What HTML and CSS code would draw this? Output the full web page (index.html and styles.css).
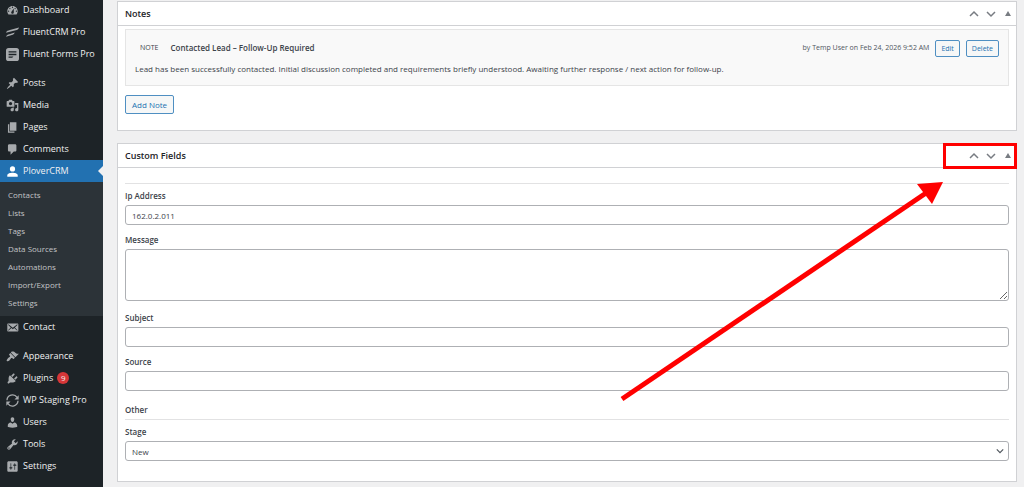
FILE: index.html
```html
<!DOCTYPE html>
<html lang="en">
<head>
    <meta charset="UTF-8">
    <meta name="viewport" content="width=device-width, initial-scale=1.0">
    <title>PloverCRM - Contact</title>
    <link rel="stylesheet" href="styles.css">
</head>
<body>
    <div class="admin">
        <nav class="sidebar">
            <a class="menu-item" href="#">
                <svg viewBox="0 0 20 20"><path fill-rule="evenodd" d="M3.76 16h12.48c1.1-1.37 1.76-3.11 1.76-5 0-4.42-3.58-8-8-8s-8 3.58-8 8c0 1.89.66 3.63 1.76 5zM10 4c.55 0 1 .45 1 1s-.45 1-1 1-1-.45-1-1 .45-1 1-1zM6 6c.55 0 1 .45 1 1s-.45 1-1 1-1-.45-1-1 .45-1 1-1zm8 0c.55 0 1 .45 1 1s-.45 1-1 1-1-.45-1-1 .45-1 1-1zm-5.37 5.55L12 7v6c0 1.1-.9 2-2 2s-2-.9-2-2c0-.57.24-1.08.63-1.45zM4 10c.55 0 1 .45 1 1s-.45 1-1 1-1-.45-1-1 .45-1 1-1zm12 0c.55 0 1 .45 1 1s-.45 1-1 1-1-.45-1-1 .45-1 1-1z"/></svg>
                Dashboard
            </a>
            <a class="menu-item" href="#">
                <svg viewBox="0 0 20 20"><path d="M0 10.200C1 7.500 3 7 6 6.200L20 2.200C19 5 17.500 5.800 15 6.500zM0 16.500C1 14 2.500 13.200 5 12.500L13.500 10C12.500 12.800 11 13.400 9 14z"/></svg>
                FluentCRM Pro
            </a>
            <a class="menu-item" href="#">
                <svg viewBox="0 0 20 20"><path fill-rule="evenodd" d="M4 0h12a4 4 0 0 1 4 4v12a4 4 0 0 1-4 4H4a4 4 0 0 1-4-4V4a4 4 0 0 1 4-4zM4 5v2h12V5zM4 9v2h12V9zM4 13v2h5.500l2-2z"/></svg>
                Fluent Forms Pro
            </a>
            <a class="menu-item group-start" href="#">
                <svg viewBox="0 0 20 20"><path d="M10.440 3.020l1.820-1.820 6.360 6.350-1.830 1.820c-1.050-.68-2.480-.57-3.410.36l-.75.75c-.92.93-1.040 2.350-.35 3.410l-1.830 1.820-2.410-2.410-2.800 2.790c-.42.42-3.380 2.710-3.800 2.290s1.860-3.390 2.280-3.810l2.790-2.790L4.100 9.360l1.830-1.820c1.050.69 2.480.57 3.400-.36l.75-.75c.93-.92 1.050-2.350.36-3.410z"/></svg>
                Posts
            </a>
            <a class="menu-item" href="#">
                <svg viewBox="0 0 20 20"><path fill-rule="evenodd" d="M13 11V4c0-.55-.45-1-1-1h-1.670L9 1H5L3.670 3H2c-.55 0-1 .45-1 1v7c0 .55.45 1 1 1h10c.55 0 1-.45 1-1zM7 4.500c1.380 0 2.500 1.120 2.500 2.500S8.380 9.500 7 9.500 4.500 8.380 4.500 7 5.620 4.500 7 4.500zM14 6h5v10.500c0 1.380-1.120 2.500-2.500 2.500S14 17.880 14 16.500s1.120-2.500 2.500-2.500c.17 0 .34.02.5.05V9h-3V6zm-4 8.050V13h2v3.500c0 1.380-1.120 2.500-2.500 2.500S7 17.880 7 16.500 8.120 14 9.500 14c.17 0 .34.02.5.05z"/></svg>
                Media
            </a>
            <a class="menu-item" href="#">
                <svg viewBox="0 0 20 20"><path d="M6 15V2h10v13H6zm-1 1h8v2H3V5h2v11z"/></svg>
                Pages
            </a>
            <a class="menu-item" href="#">
                <svg viewBox="0 0 20 20"><path d="M5 2h9c1.100 0 2 .9 2 2v7c0 1.100-.9 2-2 2h-2l-5 5v-5H5c-1.100 0-2-.9-2-2V4c0-1.100.9-2 2-2z"/></svg>
                Comments
            </a>
            <a class="menu-item current" href="#">
                <svg viewBox="0 0 20 20"><circle cx="10" cy="6" r="4"/><path d="M2 18v-2c0-3 5-4 8-4s8 1 8 4v2z"/></svg>
                PloverCRM
            </a>
            <div class="submenu">
                <a href="#">Contacts</a>
                <a href="#">Lists</a>
                <a href="#">Tags</a>
                <a href="#">Data Sources</a>
                <a href="#">Automations</a>
                <a href="#">Import/Export</a>
                <a href="#">Settings</a>
            </div>
            <a class="menu-item" href="#">
                <svg viewBox="0 0 20 20"><path fill-rule="evenodd" d="M19 14.500v-9c0-.83-.67-1.500-1.500-1.500H3.490c-.83 0-1.500.67-1.500 1.500v9c0 .83.67 1.500 1.500 1.500H17.500c.83 0 1.500-.67 1.500-1.500zm-1.310-9.110c.33.33.15.67-.03.84L13.600 9.950l3.900 4.060c.12.14.2.36.06.51-.13.16-.43.15-.56.05l-4.370-3.730-2.140 1.950-2.130-1.950-4.370 3.730c-.13.1-.43.11-.56-.05-.14-.15-.06-.37.06-.51l3.900-4.060-4.060-3.720c-.18-.17-.36-.51-.03-.84s.67-.17.95.07l6.240 5.040 6.250-5.040c.28-.24.62-.4.95-.07z"/></svg>
                Contact
            </a>
            <a class="menu-item group-start" href="#">
                <svg viewBox="0 0 20 20"><path d="M14.480 11.060L7.410 3.990l1.500-1.500c.5-.56 2.300-.47 3.510.32 1.210.8 1.430 1.280 2.910 2.100 1.180.64 2.450 1.260 4.450.85zm-.71.71L6.700 4.700 4.930 6.470c-.39.39-.39 1.020 0 1.410l1.060 1.060c.39.39.39 1.030 0 1.420-.6.6-1.430 1.110-2.210 1.690-.35.26-.7.53-1.010.84C1.430 14.230.4 16.080 1.400 17.070c.99 1 2.840-.03 4.180-1.360.31-.31.58-.66.85-1.020.57-.78 1.080-1.610 1.690-2.210.39-.39 1.020-.39 1.410 0l1.060 1.060c.39.39 1.020.39 1.410 0z"/></svg>
                Appearance
            </a>
            <a class="menu-item" href="#">
                <svg viewBox="0 0 20 20"><path d="M13.110 4.360L9.870 7.600 8 5.730l3.240-3.240c.35-.34 1.050-.2 1.560.32.52.51.66 1.210.31 1.550zm-8 1.770l.91-1.120 9.010 9.010-1.190.84c-.71.71-2.630 1.160-3.820 1.160H6.140L4.900 17.260c-.59.59-1.540.59-2.120 0-.59-.58-.59-1.530 0-2.120l1.240-1.240v-3.880c0-1.130.4-3.190 1.090-3.890zm7.260 3.970l3.240-3.240c.34-.35 1.040-.21 1.550.31.52.51.66 1.210.31 1.550l-3.240 3.250z"/></svg>
                Plugins <span class="count">9</span>
            </a>
            <a class="menu-item" href="#">
                <svg viewBox="0 0 20 20"><path class="line" d="M1.500 9.500A8.500 8.500 0 0 1 17 5.200M18.500 10.500A8.500 8.500 0 0 1 3 14.800"/><path d="M19.500 2v6.500H13zM.5 18v-6.500H7z"/></svg>
                WP Staging Pro
            </a>
            <a class="menu-item" href="#">
                <svg viewBox="0 0 20 20"><path d="M10 9.250c-2.270 0-2.730-3.440-2.730-3.440C7 4.020 7.820 2 9.970 2c2.160 0 2.980 2.020 2.710 3.810 0 0-.41 3.440-2.680 3.440zm0 2.570L12.720 10c2.390 0 4.520 2.330 4.520 4.530v2.490s-3.650 1.130-7.240 1.130c-3.650 0-7.240-1.130-7.240-1.130v-2.490c0-2.250 1.940-4.480 4.470-4.480z"/></svg>
                Users
            </a>
            <a class="menu-item" href="#">
                <svg viewBox="0 0 20 20"><path fill-rule="evenodd" d="M16.680 9.770c-1.340 1.340-3.300 1.670-4.950.99l-5.410 6.520c-.99.99-2.590.99-3.580 0s-.99-2.590 0-3.570l6.520-5.420c-.68-1.650-.35-3.610.99-4.950 1.280-1.280 3.120-1.620 4.720-1.060l-2.890 2.890 2.820 2.820 2.860-2.870c.53 1.580.18 3.390-1.080 4.650zM3.810 16.210c.4.39 1.040.39 1.430 0 .4-.4.4-1.040 0-1.430-.39-.4-1.030-.4-1.430 0-.39.39-.39 1.030 0 1.430z"/></svg>
                Tools
            </a>
            <a class="menu-item" href="#">
                <svg viewBox="0 0 20 20"><path fill-rule="evenodd" d="M18 16V4c0-1.100-.9-2-2-2H4c-1.100 0-2 .9-2 2v12c0 1.100.9 2 2 2h12c1.100 0 2-.9 2-2zM8 11h1c.55 0 1 .45 1 1s-.45 1-1 1H8v1.500c0 .28-.22.5-.5.5s-.5-.22-.5-.5V13H6c-.55 0-1-.45-1-1s.45-1 1-1h1V5.500c0-.28.22-.5.5-.5s.5.22.5.5V11zm5-2h-1c-.55 0-1-.45-1-1s.45-1 1-1h1V5.500c0-.28.22-.5.5-.5s.5.22.5.5V7h1c.55 0 1 .45 1 1s-.45 1-1 1h-1v5.500c0 .28-.22.5-.5.5s-.5-.22-.5-.5V9z"/></svg>
                Settings
            </a>
        </nav>

        <main class="content">
            <section class="postbox">
                <div class="postbox-header">
                    <h2>Notes</h2>
                    <div class="handle-actions">
                        <button type="button" aria-label="Move up"><svg viewBox="0 0 10 10"><path d="M1 7l4-4 4 4"/></svg></button>
                        <button type="button" aria-label="Move down"><svg viewBox="0 0 10 10"><path d="M1 3l4 4 4-4"/></svg></button>
                        <button type="button" aria-label="Toggle panel"><svg viewBox="0 0 10 10"><path class="solid" d="M2 7l3-5 3 5z"/></svg></button>
                    </div>
                </div>
                <div class="notes">
                    <article class="note">
                        <div class="note-head">
                            <span class="note-type">NOTE</span>
                            <strong>Contacted Lead – Follow-Up Required</strong>
                            <span class="note-meta">by Temp User on Feb 24, 2026 9:52 AM</span>
                            <button class="button small" type="button">Edit</button>
                            <button class="button small" type="button">Delete</button>
                        </div>
                        <p>Lead has been successfully contacted. Initial discussion completed and requirements briefly understood. Awaiting further response / next action for follow-up.</p>
                    </article>
                    <button class="button" type="button">Add Note</button>
                </div>
            </section>

            <section class="postbox">
                <div class="postbox-header">
                    <h2>Custom Fields</h2>
                    <div class="handle-actions">
                        <button type="button" aria-label="Move up"><svg viewBox="0 0 10 10"><path d="M1 7l4-4 4 4"/></svg></button>
                        <button type="button" aria-label="Move down"><svg viewBox="0 0 10 10"><path d="M1 3l4 4 4-4"/></svg></button>
                        <button type="button" aria-label="Toggle panel"><svg viewBox="0 0 10 10"><path class="solid" d="M2 7l3-5 3 5z"/></svg></button>
                    </div>
                </div>
                <form class="fields">
                    <hr>
                    <div class="field">
                        <label for="ip">Ip Address</label>
                        <input type="text" id="ip" value="162.0.2.011">
                    </div>
                    <div class="field">
                        <label for="message">Message</label>
                        <textarea id="message"></textarea>
                    </div>
                    <div class="field">
                        <label for="subject">Subject</label>
                        <input type="text" id="subject">
                    </div>
                    <div class="field">
                        <label for="source">Source</label>
                        <input type="text" id="source">
                    </div>
                    <h3>Other</h3>
                    <div class="field">
                        <label for="stage">Stage</label>
                        <div class="select-wrap">
                            <select id="stage">
                                <option>New</option>
                            </select>
                            <svg viewBox="0 0 10 10"><path d="M1 3l4 4 4-4"/></svg>
                        </div>
                    </div>
                </form>
                <!-- Highlight around the panel controls -->
                <div class="callout-box"></div>
                <svg class="callout-arrow" viewBox="0 0 330 230">
                    <path class="shaft" d="M5 225L312 17"/>
                    <path d="M300 10l26-2-11 22z"/>
                </svg>
            </section>
        </main>
    </div>
</body>
</html>
```
FILE: styles.css
```css
* {
    box-sizing: border-box;
}

body {
    margin: 0;
    background: #f0f0f1;
    color: #3c434a;
    font-family: "Open Sans", "Noto Sans", sans-serif;
    font-size: 8px;
    line-height: 12px;
    overflow: hidden;
}

h2, h3, p {
    margin: 0;
}

button, input, textarea, select {
    font-family: inherit;
    font-size: inherit;
    color: inherit;
}

.admin {
    display: flex;
    min-height: 100vh;
}

/* Sidebar */
.sidebar {
    flex: 0 0 103px;
    margin-top: -1px;
    background: #1d2327;
}

.sidebar a {
    color: #f0f0f1;
    text-decoration: none;
    white-space: nowrap;
}

.menu-item {
    position: relative;
    display: flex;
    align-items: center;
    gap: 4px;
    height: 22px;
    padding-left: 6px;
    font-size: 9px;
}

.menu-item svg {
    flex: none;
    width: 13px;
    height: 13px;
    fill: #a7aaad;
}

.menu-item svg .line {
    fill: none;
    stroke: #a7aaad;
    stroke-width: 2;
}

.group-start {
    margin-top: 7px;
}

.current {
    background: #2271b1;
}

.current svg {
    fill: #ffffff;
}

.current::after {
    content: "";
    position: absolute;
    right: 0;
    border: 5px solid transparent;
    border-right-color: #f0f0f1;
}

.submenu {
    display: flex;
    flex-direction: column;
    padding: 4px 8px;
    background: #2c3338;
}

.submenu a {
    color: #c3c4c7;
    line-height: 18px;
}

.count {
    width: 12px;
    height: 12px;
    border-radius: 50%;
    background: #d63638;
    font-size: 8px;
    line-height: 12px;
    text-align: center;
}

/* Panels */
.content {
    flex: 1;
    display: flex;
    flex-direction: column;
    gap: 12px;
    padding: 1px 7px 5px 14px;
}

.postbox {
    position: relative;
    background: #ffffff;
    border: 1px solid #d0d1d4;
}

.postbox-header {
    display: flex;
    align-items: center;
    justify-content: space-between;
    height: 24px;
    padding-left: 7px;
    border-bottom: 1px solid #d0d1d4;
}

.postbox-header h2 {
    color: #1d2327;
    font-size: 9px;
    font-weight: 600;
}

.handle-actions {
    display: flex;
}

.handle-actions button {
    display: flex;
    align-items: center;
    justify-content: center;
    width: 17px;
    height: 20px;
    padding: 0;
    border: none;
    background: none;
}

.handle-actions svg {
    width: 10px;
    height: 10px;
    fill: none;
    stroke: #787c82;
    stroke-width: 1.5;
}

.handle-actions .solid {
    fill: #787c82;
    stroke: none;
}

/* Notes */
.notes {
    padding: 3px 7px 16px;
}

.note {
    margin-bottom: 9px;
    padding: 9px 9px 10px;
    background: #f9f9f9;
    border: 1px solid #e5e5e5;
}

.note-head {
    display: flex;
    align-items: center;
    gap: 6px;
    height: 18px;
    margin-bottom: 6px;
    padding-left: 5px;
}

.note-head strong {
    margin: 0 auto 0 6px;
    font-weight: 600;
}

.note-type {
    font-size: 7px;
}

.note-meta {
    color: #50575e;
    font-size: 7px;
}

.button {
    height: 19px;
    padding: 0 6px;
    background: #f6f7f7;
    border: 1px solid #4f8fc2;
    border-radius: 2px;
    color: #2271b1;
    line-height: 17px;
}

.button.small {
    height: 17px;
    padding: 0 5px;
    font-size: 7px;
    line-height: 15px;
}

/* Custom fields */
.fields {
    padding: 15px 7px 20px;
}

.fields hr {
    margin: 0 0 3px;
    border: none;
    border-top: 1px solid #e2e2e3;
}

.fields h3 {
    margin: 10px 0 3px;
    border-bottom: 1px solid #e2e2e3;
    font-size: 8px;
    font-weight: 600;
    line-height: 18px;
}

.field + .field {
    margin-top: 6px;
}

.field label {
    display: block;
    font-weight: 600;
    line-height: 18px;
}

.field input,
.field textarea,
.field select {
    display: block;
    width: 100%;
    height: 20px;
    padding: 0 6px;
    background: #ffffff;
    border: 1px solid #aeb0b4;
    border-radius: 3px;
}

.field textarea {
    height: 52px;
    margin-bottom: 8px;
}

.select-wrap {
    position: relative;
}

.field select {
    appearance: none;
}

.select-wrap svg {
    position: absolute;
    top: 6px;
    right: 5px;
    width: 8px;
    height: 8px;
    fill: none;
    stroke: #50575e;
    stroke-width: 1.5;
    pointer-events: none;
}

/* Callout */
.callout-box {
    position: absolute;
    top: -1px;
    right: -1px;
    width: 74px;
    height: 26px;
    border: 3px solid #ff0000;
}

.callout-arrow {
    position: absolute;
    top: 30px;
    right: 69px;
    width: 330px;
    height: 230px;
    fill: #ff0000;
    pointer-events: none;
}

.callout-arrow .shaft {
    stroke: #ff0000;
    stroke-width: 5;
}
```
